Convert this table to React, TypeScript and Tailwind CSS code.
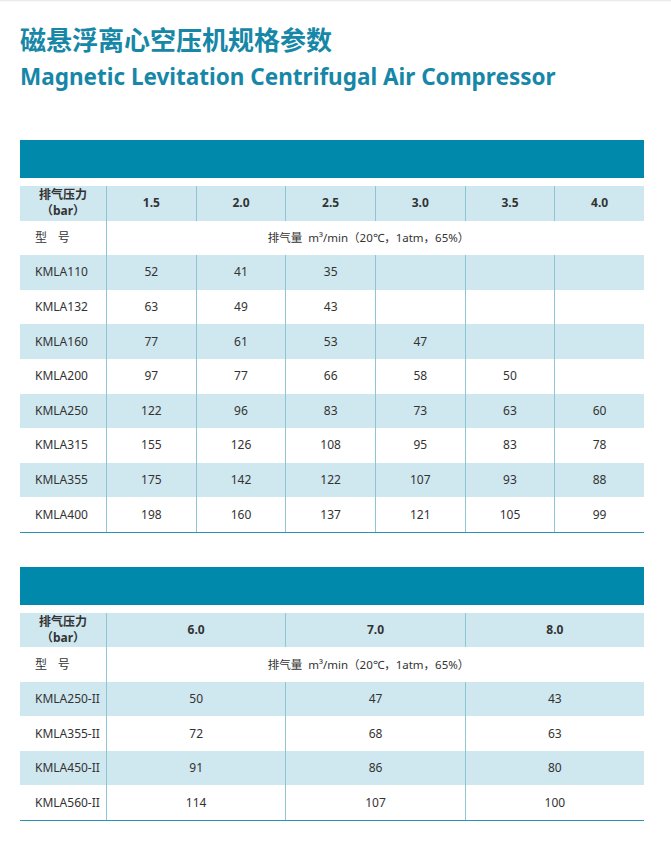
import React from "react";

const font = { fontFamily: '"Noto Sans", "Noto Sans CJK SC", sans-serif' };

type Row = { model: string; values: (number | null)[] };

const table1Pressures = ["1.5", "2.0", "2.5", "3.0", "3.5", "4.0"];
const table1Rows: Row[] = [
  { model: "KMLA110", values: [52, 41, 35, null, null, null] },
  { model: "KMLA132", values: [63, 49, 43, null, null, null] },
  { model: "KMLA160", values: [77, 61, 53, 47, null, null] },
  { model: "KMLA200", values: [97, 77, 66, 58, 50, null] },
  { model: "KMLA250", values: [122, 96, 83, 73, 63, 60] },
  { model: "KMLA315", values: [155, 126, 108, 95, 83, 78] },
  { model: "KMLA355", values: [175, 142, 122, 107, 93, 88] },
  { model: "KMLA400", values: [198, 160, 137, 121, 105, 99] },
];

const table2Pressures = ["6.0", "7.0", "8.0"];
const table2Rows: Row[] = [
  { model: "KMLA250-II", values: [50, 47, 43] },
  { model: "KMLA355-II", values: [72, 68, 63] },
  { model: "KMLA450-II", values: [91, 86, 80] },
  { model: "KMLA560-II", values: [114, 107, 100] },
];

function SpecTable({ pressures, rows, rowH }: { pressures: string[]; rows: Row[]; rowH: string }) {
  const cols = pressures.length;
  const colW = cols === 6 ? "w-[89.67px]" : "w-[179.33px]";
  return (
    <div className="ml-[20px] w-[624px]">
      <div className="h-[38px] bg-[#0089ab]" />
      <div className="mt-[8px] border-b border-[#2b93b1]">
        {/* header */}
        <div className={`flex ${rowH} bg-[#cfe7ee]`}>
          <div className="w-[86px] shrink-0 flex flex-col items-center justify-center text-[12px] leading-[16px] font-bold text-[#333]">
            <span>排气压力</span>
            <span>（bar）</span>
          </div>
          {pressures.map((p) => (
            <div
              key={p}
              className={`${colW} shrink-0 border-l border-[#8fc4d3] flex items-center justify-center text-[12px] font-bold text-[#333]`}
            >
              {p}
            </div>
          ))}
        </div>
        {/* unit row */}
        <div className={`flex ${rowH} bg-white`}>
          <div className="w-[86px] shrink-0 flex items-center pl-[15px] text-[12px] text-[#333] tracking-[0.9em]">
            型号
          </div>
          <div className="flex-1 border-l border-[#8fc4d3] flex items-center justify-center pr-[14px] text-[11.5px] text-[#333]">
            排气量&nbsp;&nbsp;m³/min（20℃，1atm，65%）
          </div>
        </div>
        {rows.map((r, i) => (
          <div key={r.model} className={`flex ${rowH} ${i % 2 === 0 ? "bg-[#cfe7ee]" : "bg-white"}`}>
            <div className="w-[86px] shrink-0 flex items-center pl-[15px] text-[12px] text-[#333]">
              {r.model}
            </div>
            {r.values.map((v, j) => (
              <div
                key={j}
                className={`${colW} shrink-0 border-l border-[#8fc4d3] flex items-center justify-center text-[12px] text-[#333]`}
              >
                {v ?? ""}
              </div>
            ))}
          </div>
        ))}
      </div>
    </div>
  );
}

export default function App() {
  return (
    <div className="w-[671px] min-h-[844px] bg-white" style={font}>
      <div className="h-[2px] bg-gradient-to-b from-[#e5e5e5] to-white" />
      <div className="pl-[20px] pt-[22px]">
        <h1 className="text-[26px] leading-[32px] font-bold text-[#1787a8]">磁悬浮离心空压机规格参数</h1>
        <h2 className="mt-[6px] text-[22.5px] leading-[30px] font-bold text-[#1787a8]">
          Magnetic Levitation Centrifugal Air Compressor
        </h2>
      </div>
      <div className="mt-[48px]">
        <SpecTable pressures={table1Pressures} rows={table1Rows} rowH="h-[34.6px]" />
      </div>
      <div className="mt-[34px]">
        <SpecTable pressures={table2Pressures} rows={table2Rows} rowH="h-[34.5px]" />
      </div>
    </div>
  );
}
